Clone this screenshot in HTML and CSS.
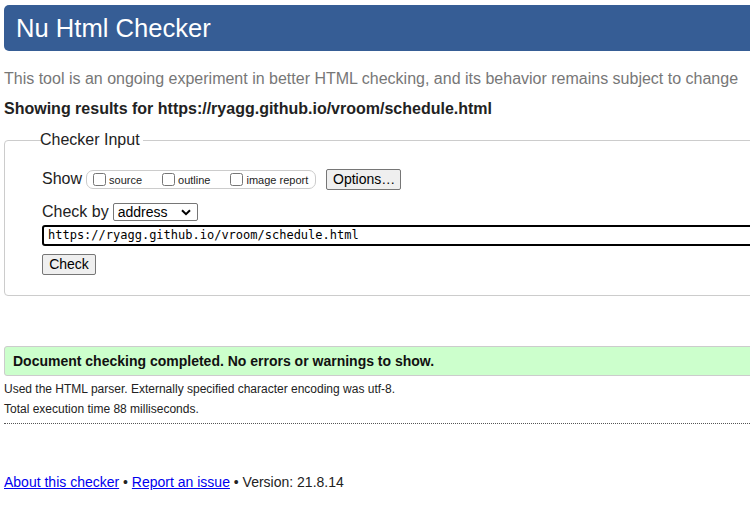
FILE: index.html
```html
<!DOCTYPE html>
<html>
<head>
<meta charset="utf-8">
<link rel="stylesheet" href="styles.css">
</head>
<body>
<div class="page">
  <h1 class="title">Nu Html Checker</h1>
  <p class="lede">This tool is an ongoing experiment in better HTML checking, and its behavior remains subject to change</p>
  <p class="showing">Showing results for https://ryagg.github.io/vroom/schedule.html</p>
  <fieldset class="inputs">
    <legend class="legend">Checker Input</legend>
    <div class="row show-row">
      <span class="lbl">Show</span>
      <span class="opts">
        <label class="opt"><input type="checkbox" class="cb">source</label>
        <label class="opt"><input type="checkbox" class="cb">outline</label>
        <label class="opt"><input type="checkbox" class="cb">image report</label>
      </span>
      <button class="btn options-btn">Options…</button>
    </div>
    <div class="row checkby-row">
      <span class="lbl">Check by</span>
      <span class="select">address<svg class="chev" width="10" height="7" viewBox="0 0 10 7"><path d="M1 1.2 L5 5.2 L9 1.2" fill="none" stroke="#000" stroke-width="2"/></svg></span>
    </div>
    <div class="url">https://ryagg.github.io/vroom/schedule.html</div>
    <button class="btn check-btn">Check</button>
  </fieldset>
  <div class="success">Document checking completed. No errors or warnings to show.</div>
  <p class="details">Used the HTML parser. Externally specified character encoding was utf-8.</p>
  <p class="details">Total execution time 88 milliseconds.</p>
  <hr class="dots">
  <p class="footer"><a href="#">About this checker</a> • <a href="#">Report an issue</a> • Version: 21.8.14</p>
</div>
</body>
</html>
```
FILE: styles.css
```css
html { overflow: hidden; }
body {
  margin: 0;
  padding: 5px 0 0 4px;
  font-family: "Liberation Sans", Arial, sans-serif;
  color: #222;
  background: #fff;
}
.page { width: 800px; }
.title {
  margin: 0;
  height: 46px;
  box-sizing: border-box;
  padding: 0 0 0 12px;
  background: #365d95;
  color: #fff;
  font-weight: normal;
  font-size: 25.6px;
  line-height: 46px;
  border-radius: 5px;
}
.lede {
  margin: 18px 0 0;
  font-size: 16px;
  line-height: 20px;
  color: #777;
}
.showing {
  margin: 10px 0 0;
  font-size: 16px;
  line-height: 20px;
  font-weight: bold;
  color: #222;
}
.inputs {
  margin: 11px 0 0;
  padding: 10px 0 20px 37px;
  border: 1px solid #ccc;
  border-radius: 4px;
  min-width: 0;
}
.legend {
  padding: 0 1px;
  margin-left: -1px;
  font-size: 16px;
  line-height: 20px;
  color: #222;
  position: relative;
  left: -2px;
}
.row {
  display: flex;
  align-items: center;
}
.show-row { height: 22px; margin-top: 8px; }
.lbl { font-size: 16px; color: #222; white-space: nowrap; }
.opts {
  display: flex;
  align-items: center;
  flex-shrink: 0;
  margin-left: 4px;
  height: 17px;
  width: 225px;
  border: 1px solid #ccc;
  border-radius: 7px;
  box-sizing: content-box;
  padding: 0 0 0 3px;
}
.opt {
  display: flex;
  align-items: center;
  flex-shrink: 0;
  white-space: nowrap;
  font-size: 11px;
  color: #222;
  margin-right: 17px;
  padding-top: 2px;
}
.opt:last-child { margin-right: 0; }
.cb {
  margin: -2px 3px 0 3px;
  width: 13px;
  height: 13px;
  flex-shrink: 0;
}
.btn {
  font-family: "Liberation Sans", Arial, sans-serif;
  font-size: 14px;
  color: #000;
  background: #efefef;
  border: 1px solid #767676;
  border-radius: 2px;
  padding: 0 6px;
  height: 21px;
  line-height: 19px;
  white-space: nowrap;
}
.options-btn { margin-left: 10px; width: 75px; flex-shrink: 0; }
.checkby-row { margin-top: 12px; height: 20px; }
.select {
  margin-left: 4px;
  display: flex;
  align-items: center;
  justify-content: space-between;
  box-sizing: border-box;
  width: 85px;
  height: 18px;
  border: 1px solid #767676;
  border-radius: 2px;
  padding: 0 6px 0 4px;
  font-size: 14px;
  color: #000;
}
.url {
  margin-top: 3px;
  height: 21px;
  box-sizing: border-box;
  border: 2px solid #000;
  border-radius: 3px;
  padding: 0 4px;
  font-family: "DejaVu Sans Mono", "Liberation Mono", monospace;
  font-size: 12px;
  line-height: 17px;
  color: #000;
}
.check-btn { margin-top: 8px; width: 54px; height: 21px; padding: 0; display: block; }
.success {
  margin-top: 50px;
  height: 30px;
  box-sizing: border-box;
  border: 1px solid #ccc;
  border-radius: 3px;
  background: #ccffcc;
  padding: 0 0 0 8px;
  font-size: 14px;
  font-weight: bold;
  line-height: 28px;
  color: #111;
}
.details {
  margin: 6px 0 0;
  font-size: 12px;
  line-height: 14px;
  color: #222;
}
.dots {
  margin: 7px 0 0;
  border: 0;
  border-top: 1px dotted #555;
  height: 0;
}
.footer {
  margin: 49px 0 0;
  font-size: 14px;
  line-height: 18px;
  color: #222;
}
.footer a { color: #00e; }
```
